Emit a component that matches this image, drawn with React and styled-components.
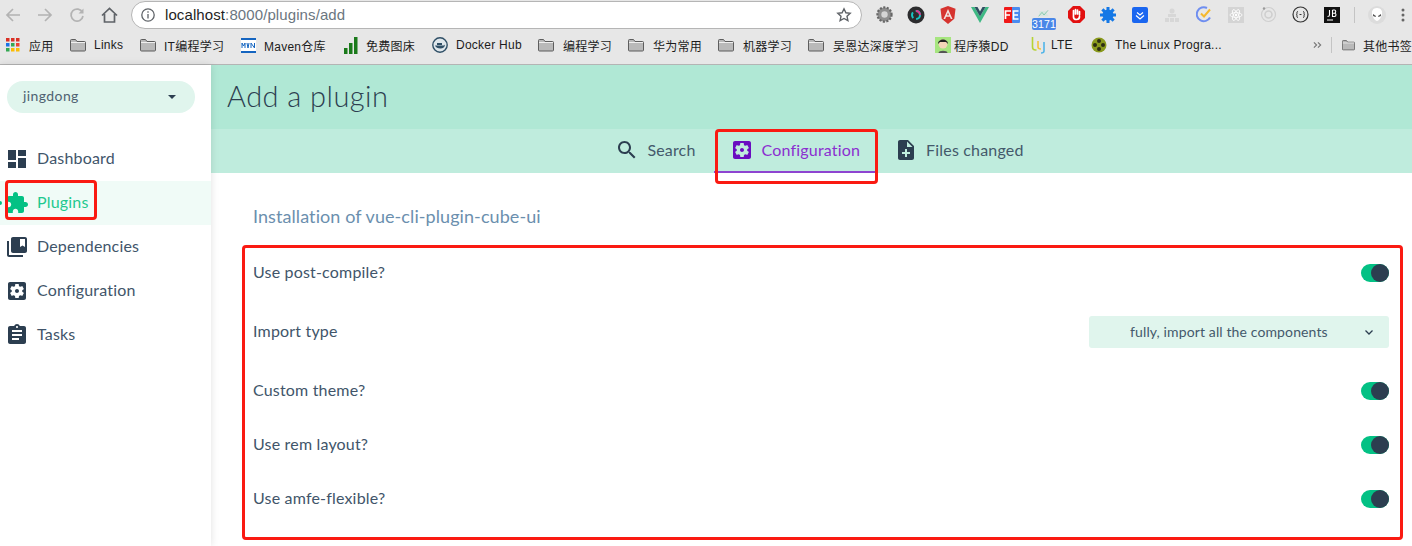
import React from "react";
import styled, { createGlobalStyle } from "styled-components";

const Global = createGlobalStyle`
  html, body { margin: 0; padding: 0; background: #fff; overflow: hidden; }
  * { box-sizing: border-box; }
`;

const Stage = styled.div`
  position: relative;
  width: 1412px;
  height: 546px;
  overflow: hidden;
  display: flex;
  flex-direction: column;
  font-family: Lato, "Noto Sans CJK SC", sans-serif;
  letter-spacing: 0.18px;
  color: #2c3e50;
`;

/* browser chrome */
const Chrome = styled.header`
  flex: none;
  height: 65px;
  background: #e7e7e7;
  border-bottom: 1px solid #b4b4b4;
  display: flex;
  flex-direction: column;
`;
const Toolbar = styled.div`
  height: 29px;
  display: flex;
  align-items: center;
`;
const NavButton = styled.span`
  flex: none;
  width: 32px;
  height: 28px;
  display: flex;
  align-items: center;
  padding-left: 5px;
  color: ${p => (p.$on ? "#5f6368" : "#b3b3b3")};
`;
const Omnibox = styled.div`
  flex: none;
  width: 731px;
  height: 28px;
  margin-left: 3px;
  background: #fff;
  border: 1px solid #b5b5b5;
  border-radius: 14px;
  display: flex;
  align-items: center;
  padding: 0 9px;
  font: 15px "Liberation Sans", Arial, sans-serif;
  letter-spacing: 0.1px;
  color: #6b7680;
`;
const Url = styled.span`
  margin-left: 10px;
  flex: 1;
  b { font-weight: 400; color: #1f1f1f; }
`;
const Extensions = styled.div`
  flex: none;
  display: flex;
  align-items: center;
  margin-left: 6px;
`;
const Ext = styled.span`
  position: relative;
  flex: none;
  width: 32px;
  height: 28px;
  display: flex;
  align-items: center;
  justify-content: center;
`;
const Overflow = styled.span`
  flex: none;
  height: 28px;
  display: flex;
  align-items: center;
  margin-left: 8px;
`;
const Badge = styled.span`
  position: absolute;
  left: 4px;
  top: 17px;
  width: 24px;
  height: 12px;
  border-radius: 2px;
  background: #4a87e8;
  color: #fff;
  font: 10.5px/12px "Liberation Sans", Arial, sans-serif;
  text-align: center;
`;
const GraphSvg = styled.svg`
  margin-top: -3px;
`;
const Divider = styled.span`
  flex: none;
  width: 1px;
  height: 16px;
  background: #c4c4c4;
  margin: ${p => p.$m || "0 6px"};
`;
const Bookmarks = styled.div`
  height: 35px;
  display: flex;
  align-items: center;
  padding: 0 0 3px 6px;
  font: 12px "Liberation Sans", "Noto Sans CJK SC", sans-serif;
  letter-spacing: 0.25px;
  color: #1c1c1c;
  white-space: nowrap;
`;
const Bookmark = styled.span`
  display: flex;
  align-items: center;
  gap: ${p => p.$gap ?? 8}px;
  width: ${p => p.$w}px;
  flex: none;
`;

/* page */
const Body = styled.div`
  flex: 1;
  min-height: 0;
  display: flex;
`;
const Sidebar = styled.aside`
  flex: none;
  width: 211px;
  background: #fff;
  box-shadow: 0 0 8px rgba(0, 0, 0, 0.12);
  padding-top: 16px;
  position: relative;
  z-index: 1;
`;
const ProjectSelect = styled.div`
  width: 188px;
  height: 32px;
  margin-left: 7px;
  border-radius: 16px;
  background: #e0f5ed;
  display: flex;
  align-items: center;
  justify-content: space-between;
  padding: 0 19px 3px 16px;
  font-size: 14px;
  letter-spacing: 0.4px;
  color: #4f6272;
`;
const Caret = styled.span`
  width: 0;
  height: 0;
  margin-top: 3px;
  border-left: 4.5px solid transparent;
  border-right: 4.5px solid transparent;
  border-top: 4.5px solid #2c3e50;
`;
const Nav = styled.nav`
  margin-top: 24px;
`;
const Label = styled.span`
  margin-bottom: ${p => p.$lift ?? 2}px;
`;
const NavItem = styled.div`
  position: relative;
  height: 44px;
  display: flex;
  align-items: center;
  gap: 8px;
  padding-left: 5px;
  font-size: 16px;
  background: ${p => (p.$active ? "#f0fbf7" : "transparent")};
  color: ${p => (p.$active ? "#1fc98f" : "#41556a")};
  svg { color: ${p => (p.$active ? "#03c184" : "#2c3e50")}; }
  ${p =>
    p.$active &&
    `&::before {
      content: "";
      position: absolute;
      left: -2px;
      top: 20px;
      width: 4px;
      height: 4px;
      border-radius: 50%;
      background: #03c184;
    }`}
`;
const Main = styled.main`
  flex: 1;
  min-width: 0;
  display: flex;
  flex-direction: column;
`;
const PageHeader = styled.div`
  height: 64px;
  background: #b0e8d5;
  display: flex;
  align-items: center;
  padding: 0 0 3px 16px;
`;
const Title = styled.h1`
  margin: 0;
  font-size: 29px;
  font-weight: 300;
  color: #2c3e50;
  letter-spacing: 0.45px;
`;
const Tabs = styled.div`
  height: 44px;
  background: #bfecdd;
  display: flex;
  justify-content: center;
  gap: 2px;
  padding-left: 16px;
`;
const Tab = styled.div`
  display: flex;
  align-items: center;
  gap: 8px;
  padding: 0 16px;
  font-size: 16px;
  color: ${p => (p.$active ? "#8b2fd0" : "#44596b")};
  border-bottom: 2px solid ${p => (p.$active ? "#8e44d0" : "transparent")};
  svg { color: ${p => (p.$active ? "#6a0dc0" : "#2c3e50")}; }
`;
const Content = styled.div`
  padding: 32px 23px 0 42px;
`;
const Heading = styled.h2`
  margin: 0 0 17px;
  height: 24px;
  line-height: 22px;
  font-size: 18px;
  font-weight: 400;
  letter-spacing: 0.08px;
  color: #6b8fae;
`;
const Row = styled.div`
  display: flex;
  align-items: center;
  justify-content: space-between;
  height: ${p => p.$h}px;
  font-size: 16px;
  color: #41556a;
`;
const Toggle = styled.span`
  width: 28px;
  height: 18px;
  border-radius: 9px;
  background: #03c184;
  display: flex;
  justify-content: flex-end;
  &::after {
    content: "";
    width: 18px;
    height: 18px;
    border-radius: 50%;
    background: #2c3e50;
  }
`;
const TypeSelect = styled.div`
  width: 300px;
  height: 32px;
  background: #e0f5ed;
  border-radius: 3px;
  display: flex;
  align-items: center;
  justify-content: space-between;
  padding: 0 15px 0 41px;
  font-size: 14px;
  letter-spacing: 0.12px;
  color: #44596b;
`;

/* annotations drawn over the page */
const Mark = styled.div`
  position: absolute;
  left: ${p => p.$x}px;
  top: ${p => p.$y}px;
  width: ${p => p.$w}px;
  height: ${p => p.$h}px;
  border: 3px solid #fa1a12;
  border-radius: 4px;
  z-index: 5;
`;

const Mi = ({ d, size = 24 }) => (
  <svg width={size} height={size} viewBox="0 0 24 24" fill="currentColor"><path d={d} /></svg>
);
const ICON = {
  dashboard: "M3 13h8V3H3v10zm0 8h8v-6H3v6zm10 0h8V11h-8v10zm0-18v6h8V3h-8z",
  plugin: "M20.5 11H19V7c0-1.1-.9-2-2-2h-4V3.5C13 2.12 11.88 1 10.5 1S8 2.12 8 3.5V5H4c-1.1 0-1.99.9-1.99 2v3.8H3.5c1.49 0 2.7 1.21 2.7 2.7s-1.21 2.7-2.7 2.7H2V20c0 1.1.9 2 2 2h3.8v-1.5c0-1.49 1.21-2.7 2.7-2.7 1.49 0 2.7 1.21 2.7 2.7V22H17c1.1 0 2-.9 2-2v-4h1.5c1.38 0 2.5-1.12 2.5-2.5S21.88 11 20.5 11z",
  deps: "M4 6H2v14c0 1.1.9 2 2 2h14v-2H4V6zm16-4H8c-1.1 0-2 .9-2 2v12c0 1.1.9 2 2 2h12c1.1 0 2-.9 2-2V4c0-1.1-.9-2-2-2zm0 10l-2.5-1.5L15 12V4h5v8z",
  config: "M12 10c-1.1 0-2 .9-2 2s.9 2 2 2 2-.9 2-2-.9-2-2-2zm7-7H5c-1.11 0-2 .9-2 2v14c0 1.1.89 2 2 2h14c1.11 0 2-.9 2-2V5c0-1.1-.89-2-2-2zm-1.75 9c0 .23-.02.46-.05.68l1.48 1.16c.13.11.17.3.08.45l-1.4 2.42c-.09.15-.27.21-.43.15l-1.74-.7c-.36.28-.76.51-1.18.69l-.26 1.85c-.03.17-.18.3-.35.3h-2.8c-.17 0-.32-.13-.35-.29l-.26-1.85c-.43-.18-.82-.41-1.18-.69l-1.74.7c-.16.06-.34 0-.43-.15l-1.4-2.42c-.09-.15-.05-.34.08-.45l1.48-1.16c-.03-.23-.05-.46-.05-.69 0-.23.02-.46.05-.68l-1.48-1.16c-.13-.11-.17-.3-.08-.45l1.4-2.42c.09-.15.27-.21.43-.15l1.74.7c.36-.28.76-.51 1.18-.69l.26-1.85c.03-.17.18-.3.35-.3h2.8c.17 0 .32.13.35.29l.26 1.85c.43.18.82.41 1.18.69l1.74-.7c.16-.06.34 0 .43.15l1.4 2.42c.09.15.05.34-.08.45l-1.48 1.16c.03.23.05.46.05.69z",
  tasks: "M19 3h-4.18C14.4 1.84 13.3 1 12 1c-1.3 0-2.4.84-2.82 2H5c-1.1 0-2 .9-2 2v14c0 1.1.9 2 2 2h14c1.1 0 2-.9 2-2V5c0-1.1-.9-2-2-2zm-7 0c.55 0 1 .45 1 1s-.45 1-1 1-1-.45-1-1 .45-1 1-1zm2 14H7v-2h7v2zm3-4H7v-2h10v2zm0-4H7V7h10v2z",
  search: "M15.5 14h-.79l-.28-.27C15.41 12.59 16 11.11 16 9.5 16 5.91 13.09 3 9.5 3S3 5.91 3 9.5 5.91 16 9.5 16c1.61 0 3.09-.59 4.23-1.57l.27.28v.79l5 4.99L20.49 19l-4.99-5zm-6 0C7.01 14 5 11.99 5 9.5S7.01 5 9.5 5 14 7.01 14 9.5 11.99 14 9.5 14z",
  note: "M14 2H6c-1.1 0-1.99.9-1.99 2L4 20c0 1.1.89 2 1.99 2H18c1.1 0 2-.9 2-2V8l-6-6zm2 14h-3v3h-2v-3H8v-2h3v-3h2v3h3v2zm-3-7V3.5L18.5 9H13z",
};

const Folder = () => (
  <svg width="16" height="14" viewBox="0 0 16 14">
    <path d="M.5 2.5a1 1 0 0 1 1-1h4l1.5 2h7.5a1 1 0 0 1 1 1v7.500a1 1 0 0 1-1 1h-13a1 1 0 0 1-1-1z" fill="#b9b9b9" stroke="#5d5d5d" />
    <path d="M1 4.500h14" stroke="#efefef" />
  </svg>
);
const AppsGrid = () => (
  <svg width="14" height="14" viewBox="0 0 14 14">
    {[0, 5, 10].flatMap((y, r) =>
      [0, 5, 10].map((x, c) => (
        <rect key={`${r}${c}`} x={x} y={y} width="3.500" height="3.500"
          fill={[["#d93025", "#d93025", "#d93025"], ["#1a73e8", "#34a853", "#ea4335"], ["#34a853", "#fbbc04", "#fbbc04"]][r][c]} />
      ))
    )}
  </svg>
);
const Mvn = () => (
  <svg width="15" height="15" viewBox="0 0 15 15">
    <rect width="15" height="15" fill="#fff" />
    <rect width="15" height="2" fill="#1565c0" />
    <rect y="13" width="15" height="2" fill="#1565c0" />
    <path d="M1 10V5l1.500 3L4 5v5M6 5l1 5 1-5M10 10V5l3.500 5V5" fill="none" stroke="#1565c0" strokeWidth="1" />
  </svg>
);
const Bars = () => (
  <svg width="14" height="17" viewBox="0 0 14 17">
    <rect x="0" y="11" width="3.500" height="6" fill="#1b7a1b" />
    <rect x="5" y="6" width="3.500" height="11" fill="#1b7a1b" />
    <rect x="10" y="0" width="3.500" height="17" fill="#1b7a1b" />
  </svg>
);
const Docker = () => (
  <svg width="16" height="16" viewBox="0 0 16 16">
    <circle cx="8" cy="8" r="7.200" fill="#dfe7ec" stroke="#2f4f66" strokeWidth="1.400" />
    <path d="M3 8.500h8.500c.5 0 1-.5 1.500-1 0 2.500-2 4-4.500 4S3.500 10.500 3 8.500z" fill="#2f4f66" />
    <rect x="5" y="6" width="5" height="2" fill="#2f4f66" />
  </svg>
);
const Avatar = () => (
  <svg width="16" height="16" viewBox="0 0 16 16">
    <rect width="16" height="16" fill="#a6e57f" />
    <circle cx="8" cy="7" r="4.500" fill="#f3d5b8" />
    <path d="M3 7c0-6 10-6 10 0l-2-2H5z" fill="#222" />
    <path d="M3.500 16c0-3 9-3 9 0z" fill="#555" />
  </svg>
);
const Lte = () => (
  <svg width="16" height="18" viewBox="0 0 16 18" fill="none" strokeWidth="1.600">
    <path d="M1.500 1v10c0 2 1 3 3 3h1" stroke="#b6d334" />
    <path d="M7 5v6c0 1 1 2 3 2" stroke="#f2c53d" />
    <path d="M13 6v9c0 1-1 2-3 2" stroke="#52b5e8" />
  </svg>
);
const Film = () => (
  <svg width="16" height="16" viewBox="0 0 16 16">
    <circle cx="8" cy="8" r="7.500" fill="#8a9a1e" />
    {[[8, 4], [8, 12], [4, 8], [12, 8]].map(([x, y]) => <circle key={`${x}${y}`} cx={x} cy={y} r="2" fill="#2d2d14" />)}
  </svg>
);

const Gear = () => (
  <svg width="17" height="17" viewBox="0 0 24 24"><circle cx="12" cy="12" r="10" fill="#8f8f8f" stroke="#666" strokeDasharray="3 2" strokeWidth="3" /><circle cx="12" cy="12" r="4.500" fill="#d5d5d5" /></svg>
);
const DarkLens = () => (
  <svg width="18" height="18" viewBox="0 0 18 18">
    <circle cx="9" cy="9" r="8.500" fill="#2c2c2e" />
    <circle cx="9" cy="9" r="4" fill="none" stroke="#19c4c4" strokeWidth="2" strokeDasharray="6 3" />
    <path d="M9 5a4 4 0 0 1 4 4" fill="none" stroke="#e0368c" strokeWidth="2" />
  </svg>
);
const Angular = () => (
  <svg width="16" height="18" viewBox="0 0 16 18">
    <path d="M8 0 .5 2.700l1.200 10L8 18l6.300-5.300 1.200-10z" fill="#d6332f" />
    <path d="M8 3 3.500 13h1.700l.9-2.300h3.800l.9 2.300h1.700zM7 9.200 8 6.500l1 2.700z" fill="#f3e3e0" />
  </svg>
);
const Vue = () => (
  <svg width="18" height="16" viewBox="0 0 18 16">
    <path d="M0 0h3.500L9 9.500 14.500 0H18L9 16z" fill="#3fb984" />
    <path d="M3.500 0h3L9 4.500 11.500 0h3L9 9.500z" fill="#2f4f62" />
  </svg>
);
const Fe = () => (
  <svg width="16" height="16" viewBox="0 0 16 16">
    <rect width="9" height="16" rx="1" fill="#f01818" />
    <rect x="8" width="8" height="16" rx="1" fill="#4a8bf0" />
    <path d="M1.500 12V4H7M1.500 8H6M14.500 4H9.500v8h5M9.500 8H14" fill="none" stroke="#fff" strokeWidth="1.700" />
  </svg>
);
const Graph = () => (
  <GraphSvg width="14" height="8" viewBox="0 0 18 12">
    <path d="M2 3h9l5 8H2z" fill="#cfe6dc" opacity=".6" />
    <path d="M1 11 6 5l3 4 6-7" fill="none" stroke="#7cc7a7" strokeWidth="1.300" />
  </GraphSvg>
);
const Stop = () => (
  <svg width="17" height="17" viewBox="0 0 17 17">
    <path d="M5 0h7l5 5v7l-5 5H5l-5-5V5z" fill="#e21010" />
    <path d="M5.500 8V4.500M7.500 8V3.500M9.500 8V4M11.500 9V5.500M5.500 8v3c0 1.500 1 2.500 3 2.500s3-1 3-3" fill="none" stroke="#fff" strokeWidth="1.700" strokeLinecap="round" />
  </svg>
);
const BlueBurst = () => (
  <svg width="16" height="16" viewBox="0 0 16 16">
    <circle cx="8" cy="8" r="5.500" fill="#1478e6" />
    {[0, 45, 90, 135, 180, 225, 270, 315].map(a => (
      <rect key={a} x="6.500" y="0" width="3" height="4" fill="#1478e6" transform={`rotate(${a} 8 8)`} />
    ))}
  </svg>
);
const BlueSquare = () => (
  <svg width="16" height="16" viewBox="0 0 16 16">
    <rect width="16" height="16" rx="2" fill="#1a66f0" />
    <path d="M5 5.500 8 8l3-2.500M4 8.500 8 12l4-3.500" fill="none" stroke="#fff" strokeWidth="1.200" />
  </svg>
);
const Faint = () => (
  <svg width="14" height="14" viewBox="0 0 14 14" fill="#d7d7d7">
    <circle cx="7" cy="3" r="2.500" /><rect x="3" y="6" width="8" height="3" /><rect x="0" y="10" width="4" height="4" /><rect x="5" y="10" width="4" height="4" /><rect x="10" y="10" width="4" height="4" />
  </svg>
);
const Tick = () => (
  <svg width="17" height="17" viewBox="0 0 17 17" fill="none">
    <path d="M14 11.500A7 7 0 1 1 11 2" stroke="#6f8ef0" strokeWidth="2" />
    <path d="M5 7.500l3 3 6-7" stroke="#f5b82e" strokeWidth="2" />
  </svg>
);
const Atom = () => (
  <svg width="16" height="16" viewBox="0 0 16 16">
    <rect width="16" height="16" fill="#d4d4d4" />
    <g fill="none" stroke="#fff" strokeWidth=".8">
      <ellipse cx="8" cy="8" rx="6" ry="2.400" />
      <ellipse cx="8" cy="8" rx="6" ry="2.400" transform="rotate(60 8 8)" />
      <ellipse cx="8" cy="8" rx="6" ry="2.400" transform="rotate(120 8 8)" />
    </g>
    <circle cx="8" cy="8" r="1.200" fill="#fff" />
  </svg>
);
const Rings = () => (
  <svg width="17" height="17" viewBox="0 0 17 17" fill="none" stroke="#cfcfcf">
    <circle cx="8.500" cy="8.500" r="7" strokeWidth="1.200" /><circle cx="8.500" cy="8.500" r="3.500" strokeWidth="1.600" />
    <circle cx="4" cy="2.500" r="1.200" fill="#9a9a9a" stroke="none" />
  </svg>
);
const Braces = () => (
  <svg width="17" height="17" viewBox="0 0 17 17" fill="none" stroke="#333">
    <circle cx="8.500" cy="8.500" r="7.500" strokeWidth="1.200" />
    <path d="M6 5.500c-1.500 0-1 1.500-1 2.500 0 .5-.5.500-.5.500s.5 0 .5.500c0 1 -.5 2.500 1 2.500M11 5.500c1.500 0 1 1.500 1 2.500 0 .5.500.5.500.5s-.5 0-.5.500c0 1 .5 2.500-1 2.500M7.500 8.500h2" strokeWidth="1" />
  </svg>
);
const Jb = () => (
  <svg width="16" height="16" viewBox="0 0 16 16">
    <rect width="16" height="16" fill="#111" />
    <path d="M5.500 3v5c0 1-.5 1.500-2 1.500M8.500 3v6.500h2c2 0 2-3.300 0-3.300h-2m2 0c1.600 0 1.600-3.200 0-3.200h-2M3 13h6" fill="none" stroke="#fff" strokeWidth="1.100" />
  </svg>
);
const Alien = () => (
  <svg width="18" height="20" viewBox="0 0 18 20">
    <circle cx="9" cy="10" r="9" fill="#dcdcdc" />
    <path d="M9 3c4 0 5.500 3 5 6-.5 3-3 7-5 7s-4.500-4-5-7c-.5-3 1-6 5-6z" fill="#fff" />
    <path d="M5 9l3 2-.5 1L5 11zM13 9l-3 2 .5 1 2.500-1z" fill="#555" />
  </svg>
);

const extensions = [Gear, DarkLens, Angular, Vue, Fe, null, Stop, BlueBurst, BlueSquare, Faint, Tick, Atom, Rings, Braces, Jb];

const bookmarks = [
  { icon: <AppsGrid />, label: "应用", w: 64, gap: 9 },
  { icon: <Folder />, label: "Links", w: 70 },
  { icon: <Folder />, label: "IT编程学习", w: 101 },
  { icon: <Mvn />, label: "Maven仓库", w: 103 },
  { icon: <Bars />, label: "免费图床", w: 88 },
  { icon: <Docker />, label: "Docker Hub", w: 106 },
  { icon: <Folder />, label: "编程学习", w: 90, gap: 9 },
  { icon: <Folder />, label: "华为常用", w: 90, gap: 9 },
  { icon: <Folder />, label: "机器学习", w: 90, gap: 9 },
  { icon: <Folder />, label: "吴恩达深度学习", w: 127, gap: 9 },
  { icon: <Avatar />, label: "程序猿DD", w: 96, gap: 3 },
  { icon: <Lte />, label: "LTE", w: 60, gap: 4 },
  { icon: <Film />, label: "The Linux Progra...", w: 222, gap: 8 },
];

const nav = [
  { icon: ICON.dashboard, label: "Dashboard" },
  { icon: ICON.plugin, label: "Plugins", active: true },
  { icon: ICON.deps, label: "Dependencies" },
  { icon: ICON.config, label: "Configuration" },
  { icon: ICON.tasks, label: "Tasks" },
];

const Chevron = () => (
  <svg width="10" height="10" viewBox="0 0 10 10" fill="none" stroke="#2c3e50" strokeWidth="1.300"><path d="M1.500 3.500 5 7l3.500-3.500" /></svg>
);

export default function App() {
  return (
    <Stage>
      <Global />
      <Chrome>
        <Toolbar>
          <NavButton>
            <svg width="16" height="16" viewBox="0 0 16 16" fill="none" stroke="currentColor" strokeWidth="1.700"><path d="M15 8H2M8 2 2 8l6 6" /></svg>
          </NavButton>
          <NavButton>
            <svg width="16" height="16" viewBox="0 0 16 16" fill="none" stroke="currentColor" strokeWidth="1.700"><path d="M1 8h13M8 2l6 6-6 6" /></svg>
          </NavButton>
          <NavButton>
            <svg width="16" height="16" viewBox="0 0 16 16" fill="none" stroke="currentColor" strokeWidth="1.700"><path d="M13.500 5.500A6 6 0 1 0 14 9" /><path d="M14.500 1.500v5h-5" fill="currentColor" stroke="none" /></svg>
          </NavButton>
          <NavButton $on>
            <svg width="17" height="16" viewBox="0 0 17 16" fill="none" stroke="currentColor" strokeWidth="1.700"><path d="M1 8.500 8.500 1.500 16 8.500M3.500 7v8h10V7" /></svg>
          </NavButton>
          <Omnibox>
            <svg width="14" height="14" viewBox="0 0 14 14" fill="none" stroke="#5f6368" strokeWidth="1.300">
              <circle cx="7" cy="7" r="6.200" /><path d="M7 6v4.500M7 3.300v1.500" />
            </svg>
            <Url><b>localhost</b>:8000/plugins/add</Url>
            <svg width="16" height="16" viewBox="0 0 16 16" fill="none" stroke="#5f6368" strokeWidth="1.400"><path d="m8 1.800 1.900 4 4.300.5-3.200 3 .9 4.300L8 11.500l-3.900 2.100.9-4.300-3.200-3 4.300-.5z" /></svg>
          </Omnibox>
          <Extensions>
            {extensions.map((Icon, i) =>
              Icon ? (
                <Ext key={i}><Icon /></Ext>
              ) : (
                <Ext key={i}><Graph /><Badge>3171</Badge></Ext>
              )
            )}
            <Divider />
            <Ext><Alien /></Ext>
            <Overflow>
              <svg width="4" height="14" viewBox="0 0 4 14" fill="#666"><circle cx="2" cy="2" r="1.500" /><circle cx="2" cy="7" r="1.500" /><circle cx="2" cy="12" r="1.500" /></svg>
            </Overflow>
          </Extensions>
        </Toolbar>
        <Bookmarks>
          {bookmarks.map(b => (
            <Bookmark key={b.label} $w={b.w} $gap={b.gap}>{b.icon}<span>{b.label}</span></Bookmark>
          ))}
          <svg width="10" height="8" viewBox="0 0 10 8" fill="none" stroke="#777" strokeWidth="1.300"><path d="m1 1 3 3-3 3M5.500 1l3 3-3 3" /></svg>
          <Divider $m="0 10px 0 9px" />
          <Bookmark $w={70}><Folder /><span>其他书签</span></Bookmark>
        </Bookmarks>
      </Chrome>
      <Body>
        <Sidebar>
          <ProjectSelect>jingdong<Caret /></ProjectSelect>
          <Nav>
            {nav.map(n => (
              <NavItem key={n.label} $active={n.active}><Mi d={n.icon} /><Label $lift={4}>{n.label}</Label></NavItem>
            ))}
          </Nav>
        </Sidebar>
        <Main>
          <PageHeader><Title>Add a plugin</Title></PageHeader>
          <Tabs>
            <Tab><Mi d={ICON.search} /><Label>Search</Label></Tab>
            <Tab $active><Mi d={ICON.config} /><Label>Configuration</Label></Tab>
            <Tab><Mi d={ICON.note} /><Label>Files changed</Label></Tab>
          </Tabs>
          <Content>
            <Heading>Installation of vue-cli-plugin-cube-ui</Heading>
            <Row $h={54}><Label $lift={4}>Use post-compile?</Label><Toggle /></Row>
            <Row $h={64}><Label $lift={4}>Import type</Label><TypeSelect><Label>fully, import all the components</Label><Chevron /></TypeSelect></Row>
            <Row $h={54}><Label $lift={4}>Custom theme?</Label><Toggle /></Row>
            <Row $h={54}><Label $lift={4}>Use rem layout?</Label><Toggle /></Row>
            <Row $h={54}><Label $lift={4}>Use amfe-flexible?</Label><Toggle /></Row>
          </Content>
        </Main>
      </Body>
      <Mark $x={5} $y={180} $w={92} $h={40} />
      <Mark $x={715} $y={129} $w={163} $h={55} />
      <Mark $x={242} $y={245} $w={1161} $h={295} />
    </Stage>
  );
}
